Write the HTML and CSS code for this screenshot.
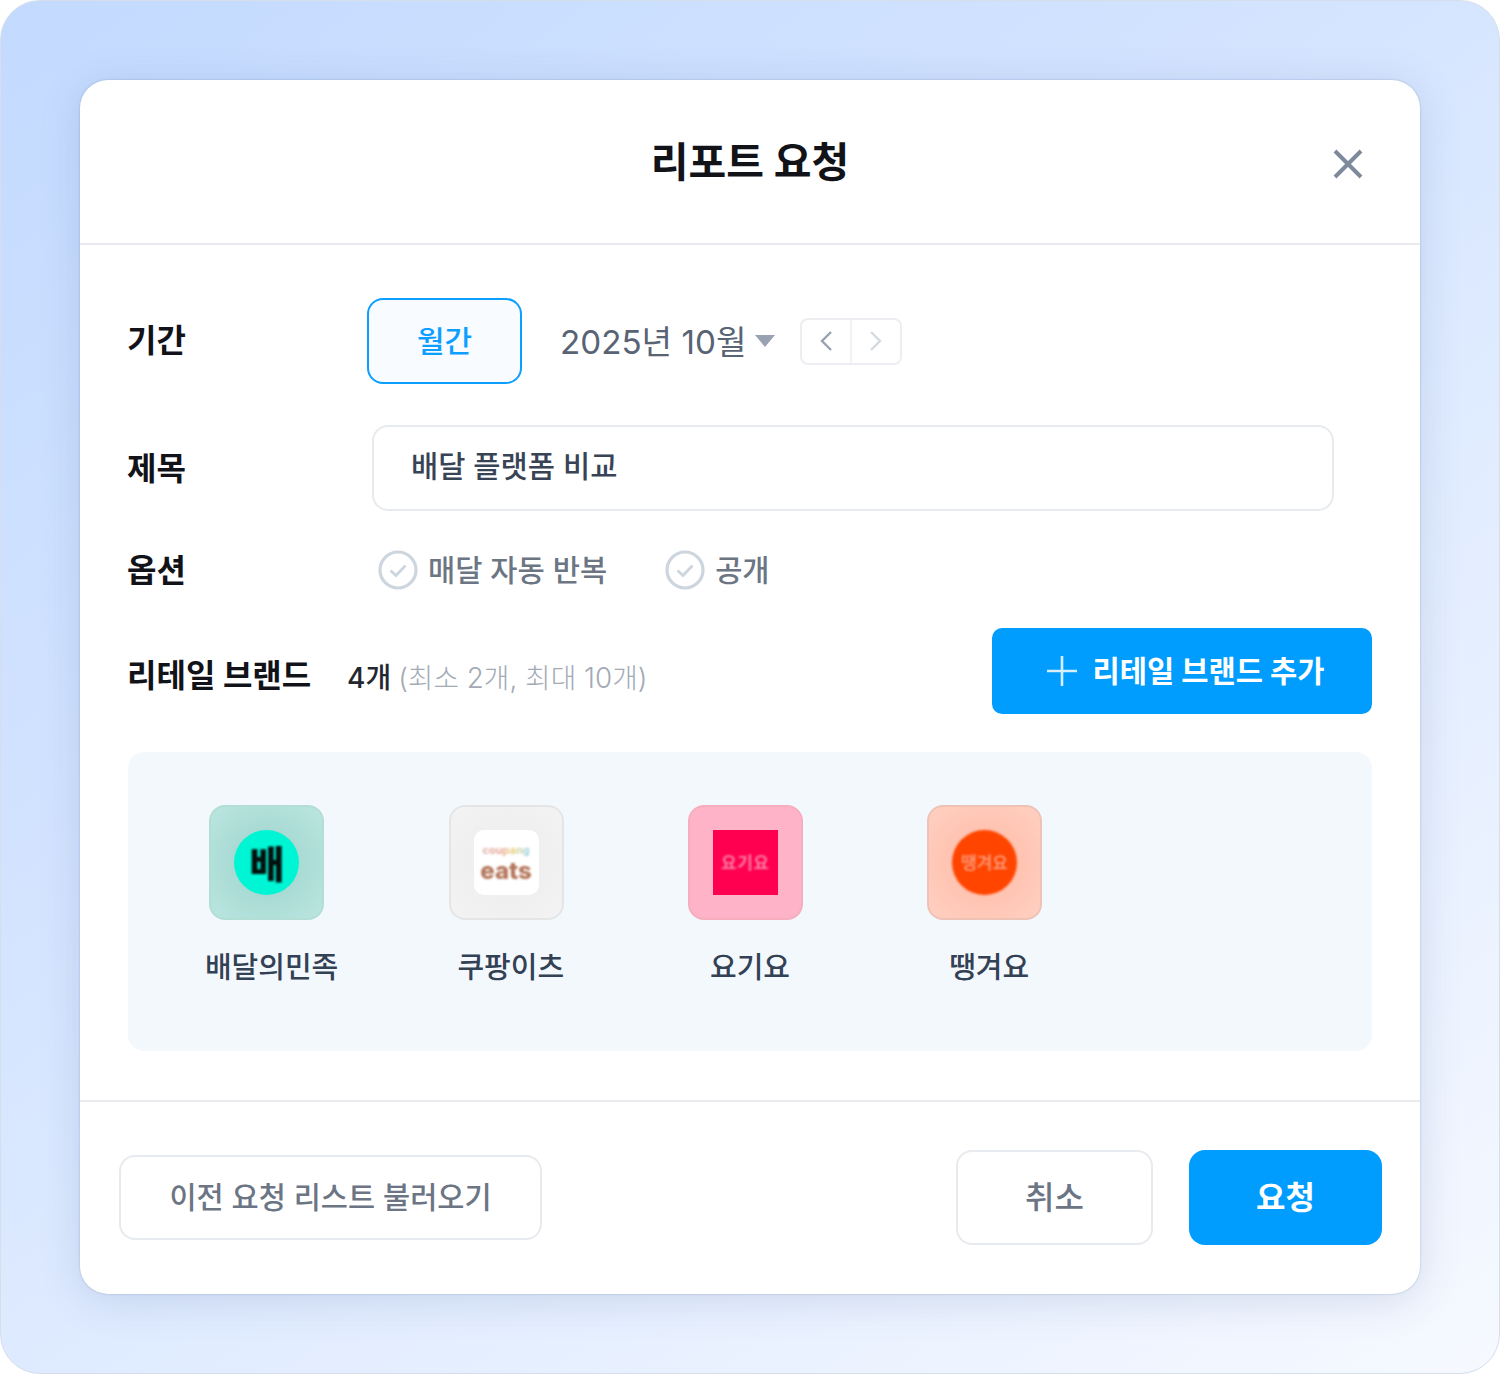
FILE: index.html
```html
<!DOCTYPE html>
<html lang="ko">
<head>
    <meta charset="UTF-8">
    <title>리포트 요청</title>
    <link rel="stylesheet" href="styles.css">
</head>
<body>
    <div class="frame">
        <div class="modal">
            <div class="modal-header">
                <h1 class="modal-title">리포트 요청</h1>
                <button class="close-btn">
                    <svg width="32" height="32" viewBox="0 0 32 32"><path d="M3 3L29 29M29 3L3 29" fill="none" stroke="#7c8a9c" stroke-width="4"/></svg>
                </button>
            </div>

            <div class="modal-body">
                <div class="row period-row">
                    <div class="label">기간</div>
                    <button class="month-btn">월간</button>
                    <div class="date-text">2025년 10월</div>
                    <span class="caret"></span>
                    <div class="pager">
                        <span class="pager-cell">
                            <svg width="14" height="22" viewBox="0 0 14 22"><path d="M12 2L3 11L12 20" fill="none" stroke="#98a2b3" stroke-width="2.4"/></svg>
                        </span>
                        <span class="pager-cell">
                            <svg width="14" height="22" viewBox="0 0 14 22"><path d="M2 2L11 11L2 20" fill="none" stroke="#d5dae1" stroke-width="2.4"/></svg>
                        </span>
                    </div>
                </div>

                <div class="row title-row">
                    <div class="label">제목</div>
                    <div class="text-input">배달 플랫폼 비교</div>
                </div>

                <div class="row option-row">
                    <div class="label">옵션</div>
                    <div class="option">
                        <svg width="40" height="40" viewBox="0 0 40 40"><circle cx="20" cy="20" r="18" fill="#fff" stroke="#cdd5df" stroke-width="3.2"/><path d="M12.5 20.5L18 25.5L27.5 15.5" fill="none" stroke="#cdd5df" stroke-width="2.8"/></svg>
                        <span>매달 자동 반복</span>
                    </div>
                    <div class="option">
                        <svg width="40" height="40" viewBox="0 0 40 40"><circle cx="20" cy="20" r="18" fill="#fff" stroke="#cdd5df" stroke-width="3.2"/><path d="M12.5 20.5L18 25.5L27.5 15.5" fill="none" stroke="#cdd5df" stroke-width="2.8"/></svg>
                        <span>공개</span>
                    </div>
                </div>

                <div class="row brand-row">
                    <div class="label brand-label">리테일 브랜드</div>
                    <div class="brand-count">4개</div>
                    <div class="brand-limit">(최소 2개, 최대 10개)</div>
                    <button class="add-btn">
                        <svg width="32" height="32" viewBox="0 0 32 32"><path d="M16 1V31M1 16H31" fill="none" stroke="#d6efff" stroke-width="2.6"/></svg>
                        리테일 브랜드 추가
                    </button>
                </div>

                <div class="brand-panel">
                    <div class="brand-item">
                        <div class="tile tile-baemin"><div class="logo logo-baemin"><span>배</span></div></div>
                        <div class="brand-name">배달의민족</div>
                    </div>
                    <div class="brand-item">
                        <div class="tile tile-coupang">
                            <div class="logo logo-coupang">
                                <span class="coupang-small">coupang</span>
                                <span class="coupang-big">eats</span>
                            </div>
                        </div>
                        <div class="brand-name">쿠팡이츠</div>
                    </div>
                    <div class="brand-item">
                        <div class="tile tile-yogiyo"><div class="logo logo-yogiyo"><span>요기요</span></div></div>
                        <div class="brand-name">요기요</div>
                    </div>
                    <div class="brand-item">
                        <div class="tile tile-ddang"><div class="logo logo-ddang"><span>땡겨요</span></div></div>
                        <div class="brand-name">땡겨요</div>
                    </div>
                </div>
            </div>

            <div class="modal-footer">
                <button class="prev-btn">이전 요청 리스트 불러오기</button>
                <button class="cancel-btn">취소</button>
                <button class="submit-btn">요청</button>
            </div>
        </div>
    </div>
</body>
</html>
```

FILE: styles.css
```css
* { box-sizing: border-box; }
body {
    margin: 0;
    background: #fff;
    font-family: Inter, "Noto Sans CJK KR", sans-serif;
}
button {
    font-family: inherit;
    cursor: pointer;
}
.frame {
    width: 1500px;
    height: 1374px;
    padding: 79px;
    border-radius: 40px;
    border: 1px solid #d5deea;
    background: linear-gradient(145deg, #c3daff 0%, #d2e3ff 35%, #f6f9ff 100%);
}
.modal {
    height: 1214px;
    background: #fff;
    border-radius: 28px;
    box-shadow: 0 0 2px rgba(70, 100, 150, 0.4), 0 6px 40px rgba(70, 100, 150, 0.18);
}

/* header */
.modal-header {
    position: relative;
    height: 165px;
    border-bottom: 2px solid #e9ebee;
    display: flex;
    align-items: center;
    justify-content: center;
    padding-bottom: 5px;
}
.modal-title {
    margin: 0;
    font-size: 41px;
    font-weight: 700;
    color: #111318;
}
.close-btn {
    position: absolute;
    top: 68px;
    right: 56px;
    padding: 0;
    border: 0;
    background: none;
    line-height: 0;
}

/* body */
.modal-body { padding: 53px 48px 49px; }
.row {
    display: flex;
    align-items: center;
}
.label {
    width: 240px;
    margin-left: -1px;
    flex-shrink: 0;
    padding-top: 2px;
    font-size: 32px;
    line-height: 38px;
    font-weight: 700;
    color: #111318;
}
.period-row .label { padding-top: 0; }
.month-btn {
    width: 155px;
    height: 86px;
    padding: 0 0 4px;
    border: 2px solid #0d9fff;
    border-radius: 16px;
    background: #f8fbff;
    color: #0d9fff;
    font-size: 30px;
    font-weight: 500;
}
.date-text {
    margin-left: 38px;
    padding-bottom: 4px;
    font-size: 33.2px;
    color: #586374;
}
.caret {
    margin-left: 9px;
    border-left: 10px solid transparent;
    border-right: 10px solid transparent;
    border-top: 12px solid #98a2b3;
}
.pager {
    margin-left: 25px;
    display: flex;
    width: 102px;
    height: 47px;
    border: 2px solid #eceef1;
    border-radius: 8px;
}
.pager-cell {
    flex: 1;
    display: flex;
    align-items: center;
    justify-content: center;
}
.pager-cell + .pager-cell { border-left: 2px solid #f1f2f4; }

.title-row { margin-top: 41px; }
.text-input {
    width: 962px;
    height: 86px;
    margin-left: 5px;
    padding: 0 37px 8px;
    display: flex;
    align-items: center;
    border: 2px solid #e7eaee;
    border-radius: 16px;
    font-size: 29.6px;
    font-weight: 500;
    color: #384455;
}
.option-row { margin-top: 39px; }
.option {
    display: flex;
    align-items: center;
    gap: 10px;
    margin-left: 11px;
    margin-right: 47px;
    font-size: 29.6px;
    line-height: 38px;
    font-weight: 500;
    color: #6c7584;
}
.brand-row { margin-top: 38px; }
.brand-label {
    width: 220px;
    padding: 10px 0 0;
}
.brand-count {
    padding-top: 10px;
    font-size: 28px;
    font-weight: 500;
    color: #232730;
}
.brand-limit {
    margin-left: 7px;
    padding-top: 10px;
    font-size: 27.8px;
    font-weight: 300;
    color: #a3aab5;
}
.add-btn {
    margin-left: auto;
    width: 380px;
    height: 86px;
    padding: 0 0 4px 6px;
    border: 0;
    border-radius: 10px;
    background: #009dff;
    color: #fff;
    font-size: 29.6px;
    font-weight: 700;
    display: flex;
    align-items: center;
    justify-content: center;
    gap: 15px;
}
.add-btn svg { margin-top: 4px; }

/* brand list */
.brand-panel {
    margin-top: 38px;
    height: 299px;
    padding: 53px 24px 0;
    border-radius: 16px;
    background: #f3f8fd;
    display: grid;
    grid-template-columns: repeat(5, 1fr);
    align-items: start;
}
.brand-item { text-align: center; }
.tile {
    width: 115px;
    height: 115px;
    margin-left: 57.4px;
    border-radius: 16px;
    border: 2px solid;
    display: flex;
    align-items: center;
    justify-content: center;
}
.tile-baemin {
    border-color: #b3ded6;
    background: radial-gradient(circle, #a5d8d1 30%, #bbe6e0 100%);
}
.tile-coupang {
    border-color: #e5e5e5;
    background: radial-gradient(circle, #eeeeee 30%, #f3f3f3 100%);
}
.tile-yogiyo {
    border-color: #f6aebf;
    background: #ffb3c8;
}
.tile-ddang {
    border-color: #efc2b6;
    background: radial-gradient(circle, #ffc0ad 30%, #ffd0c2 100%);
}
.logo {
    width: 65px;
    height: 65px;
    display: flex;
    flex-direction: column;
    align-items: center;
    justify-content: center;
    overflow: hidden;
}
.logo-baemin {
    padding-bottom: 3px;
    border-radius: 50%;
    background: #00f5d4;
    color: #020f0d;
    font-size: 38px;
    font-weight: 900;
}
.logo-baemin span { filter: blur(0.8px); }
.logo-coupang {
    border-radius: 10px;
    background: #fff;
    line-height: 1;
}
.coupang-small {
    height: 13px;
    margin-bottom: 3px;
    font-size: 11px;
    line-height: 13px;
    font-weight: 700;
    color: transparent;
    background: linear-gradient(90deg, #d9b0a0 0%, #e8a090 40%, #e8d070 65%, #8fd0f0 100%);
    -webkit-background-clip: text;
    background-clip: text;
    filter: blur(0.8px);
}
.coupang-big {
    height: 22px;
    font-size: 24px;
    line-height: 22px;
    font-weight: 800;
    color: #b4765a;
    filter: blur(1px);
}
.logo-yogiyo {
    padding-bottom: 3px;
    background: #ff0050;
    color: #ff7fa8;
    font-size: 17px;
    font-weight: 700;
    letter-spacing: 0.5px;
}
.logo-yogiyo span { filter: blur(1px); }
.logo-ddang {
    padding-bottom: 3px;
    border-radius: 50%;
    background: #ff4500;
    color: #ffa285;
    font-size: 17px;
    font-weight: 500;
    filter: blur(0.9px);
}
.brand-name {
    margin-top: 24px;
    font-size: 29px;
    font-weight: 500;
    color: #334155;
}

/* footer */
.modal-footer {
    height: 194px;
    padding: 0 38px 1px 39px;
    border-top: 2px solid #e9ebee;
    display: flex;
    align-items: center;
}
.prev-btn {
    width: 423px;
    height: 85px;
    padding: 0 0 6px;
    border: 2px solid #e7eaee;
    border-radius: 16px;
    background: #fff;
    color: #6c7584;
    font-size: 29.5px;
    font-weight: 500;
}
.cancel-btn {
    width: 197px;
    height: 95px;
    margin-left: auto;
    padding: 0 0 5px;
    border: 2px solid #e7eaee;
    border-radius: 16px;
    background: #fff;
    color: #6c7584;
    font-size: 32px;
    font-weight: 500;
}
.submit-btn {
    width: 193px;
    height: 95px;
    margin-left: 36px;
    padding: 0 0 5px;
    border: 0;
    border-radius: 16px;
    background: #009dff;
    color: #fff;
    font-size: 32px;
    font-weight: 700;
}
```
